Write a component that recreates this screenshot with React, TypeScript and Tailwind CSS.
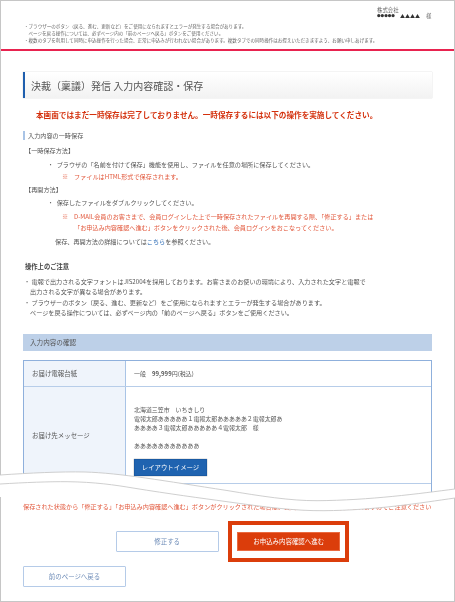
const jpFont = '[font-family:"Noto_Sans_CJK_JP","Liberation_Sans",sans-serif]'

function Bullet({ children }: { children: React.ReactNode }) {
  return (
    <p className="ml-[24.5px] h-[12px] leading-[12px]">
      <span className="inline-block w-[9.2px]">・</span>
      {children}
    </p>
  )
}

function Note({ children }: { children: React.ReactNode }) {
  return (
    <div className="ml-[39px] flex leading-[10.5px] text-[#e2583c]">
      <span className="w-[12px] shrink-0">※</span>
      <div>{children}</div>
    </div>
  )
}

// torn paper band across the page
function TornEdge() {
  const upper = 'M0 475C30 473 60 471.5 85 472C120 473 165 481 227 490.5C260 496 290 500.8 317 500.7C370 500.3 420 493.5 455 489'
  const lower = 'M0 484C25 482.5 50 481.5 67 481.7C95 482 115 485 133 488C170 494 200 498 227 501.7C265 507 295 511 324 510.7C375 510.3 420 503 455 498'
  return (
    <svg viewBox="0 0 455 602" className="pointer-events-none absolute left-[-1px] top-[-1px] h-[602px] w-[455px]">
      <path
        fill="#fff"
        d={`${upper}L455 498C420 503 375 510.3 324 510.7C295 511 265 507 227 501.7C215 500 205 499 195 497L0 497Z`}
      />
      <path d={upper} fill="none" stroke="#c9c9c9" strokeWidth="0.9" />
      <path d={lower} fill="none" stroke="#c9c9c9" strokeWidth="0.9" />
    </svg>
  )
}

export default function App() {
  return (
    <div className={`relative h-[602px] w-[455px] border border-[#c6c6c6] bg-white text-[6.15px] text-[#555] blur-[0.3px] ${jpFont}`}>
      {/* header */}
      <div className="flex justify-end pr-[23px] pt-[6px] text-[5.4px] leading-[6px] text-[#666]">
        <div className="w-[54px]">
          <p>株式会社</p>
          <p className="flex h-[6px] items-center whitespace-nowrap">
            <span className="text-[3.6px] text-[#333]">●●●●●</span>
            <span className="ml-[5px] text-[5px] text-[#333]">▲▲▲▲</span>
            <span className="ml-[6px]">様</span>
          </p>
        </div>
      </div>
      <div className="pl-[23px] pt-[4px] text-[4.56px] leading-[7px] text-[#666]">
        <p>・ブラウザーのボタン（戻る、進む、更新など）をご使用になられますとエラーが発生する場合があります。</p>
        <p className="pl-[4.5px]">ページを戻る操作については、必ずページ内の「前のページへ戻る」ボタンをご使用ください。</p>
        <p>・複数のタブを利用して同時に申込操作を行った場合、正常に申込みが行われない場合があります。複数タブでの同時操作はお控えいただきますよう、お願い申しあげます。</p>
      </div>
      <div className="mt-[5px] h-[2px] bg-[#e8234f]" />

      <div className="px-[22px]">
        {/* title */}
        <div className="mt-[21px] flex h-[26px] items-center border-l-2 border-[#1f5fae] bg-gradient-to-b from-white to-[#f2f2f2] pl-[6px] text-[10px] text-[#555] shadow-[0_0_1px_#bbb]">
          決裁（稟議）発信 入力内容確認・保存
        </div>

        <p className="mt-[11px] h-[12px] pl-[13px] text-[7.62px] font-bold leading-[12px] whitespace-nowrap text-[#d4300c]">
          本画面ではまだ一時保存は完了しておりません。一時保存するには以下の操作を実施してください。
        </p>

        <div className="mt-[10px] flex h-[9px] items-center border-l-2 border-[#a9c4e6] pl-[3px]">入力内容の一時保存</div>

        <p className="ml-[2px] mt-[5px] h-[12px] leading-[12px]">【一時保存方法】</p>
        <div className="mt-[1.5px]">
          <Bullet>ブラウザの「名前を付けて保存」機能を使用し、ファイルを任意の場所に保存してください。</Bullet>
        </div>
        <div className="mt-[1px]">
          <Note>ファイルはHTML形式で保存されます。</Note>
        </div>
        <p className="ml-[2px] mt-[1.5px] h-[12px] leading-[12px]">【再開方法】</p>
        <div className="mt-[1px]">
          <Bullet>保存したファイルをダブルクリックしてください。</Bullet>
        </div>
        <div className="mt-[3.5px]">
          <Note>
            <p>D-MAIL会員のお客さまで、会員ログインした上で一時保存されたファイルを再開する際、「修正する」または</p>
            <p>「お申込み内容確認へ進む」ボタンをクリックされた後、会員ログインをおこなってください。</p>
          </Note>
        </div>
        <p className="ml-[32px] mt-[3px] h-[12px] leading-[12px]">
          保存、再開方法の詳細については<span className="text-[#2a6ab5]">こちら</span>を参照ください。
        </p>

        <p className="ml-[2px] mt-[13px] h-[12px] text-[6.3px] font-bold leading-[12px] text-[#444]">操作上のご注意</p>
        <div className="ml-[1px] mt-[3.8px] leading-[10.4px]">
          <p>・ 電報で出力される文字フォントはJIS2004を採用しております。お客さまのお使いの環境により、入力された文字と電報で</p>
          <p className="pl-[6px]">出力される文字が異なる場合があります。</p>
          <p>・ ブラウザーのボタン（戻る、進む、更新など）をご使用になられますとエラーが発生する場合があります。</p>
          <p className="pl-[6px]">ページを戻る操作については、必ずページ内の「前のページへ戻る」ボタンをご使用ください。</p>
        </div>

        {/* confirm table */}
        <div className="mt-[16px] flex h-[17px] items-center bg-[#bdd0e8] pl-[7px] text-[6.6px]">入力内容の確認</div>
        <div className="mt-[9px] border-x border-t border-[#8fb0dc]">
          <div className="flex h-[26px] border-b border-[#b7cde9]">
            <div className="flex w-[102px] items-center border-r border-[#a9c4e6] bg-[#eff4fb] pl-[8px] text-[6.45px]">お届け電報台紙</div>
            <div className="flex items-center pl-[8px] text-[6px]">
              一般　<span className="font-bold">99,999</span>円(税込)
            </div>
          </div>
          <div className="flex h-[97px] border-b border-[#b7cde9]">
            <div className="flex w-[102px] items-center border-r border-[#a9c4e6] bg-[#eff4fb] pl-[8px] text-[6.45px]">お届け先メッセージ</div>
            <div className="pl-[8px] pt-[17.4px] text-[5.95px] leading-[9px]">
              <p>北海道三笠市　いちきしり</p>
              <p>電報太郎あああああ１電報太郎あああああ２電報太郎あ</p>
              <p>ああああ３電報太郎あああああ４電報太郎　様</p>
              <p className="mt-[9px]">あああああああああああ</p>
              <button className="mt-[8.7px] h-[17.5px] w-[73px] border border-[#1a5aa3] bg-[#1f63b0] text-[6.4px] text-white shadow-[0_0_1px_#777]">
                レイアウトイメージ
              </button>
            </div>
          </div>
        </div>
        <div className="h-[9px] border-r border-[#8fb0dc]" />

        <p className="mt-[7.3px] h-[12px] whitespace-nowrap leading-[12px] text-[#e2583c]">
          保存された状態から「修正する」「お申込み内容確認へ進む」ボタンがクリックされた場合は、会員ログイン画面が表示されますのでご注意ください
        </p>

        {/* actions */}
        <div className="ml-[92.7px] mt-[8.3px] flex items-center gap-[9.5px] text-[6.45px]">
          <button className="h-[20.5px] w-[103px] rounded-[1px] border border-[#b5cbe8] bg-white text-[#6f8db8]">修正する</button>
          <div className="border-4 border-[#db3d0b] bg-white px-[5.2px] py-[6.75px]">
            <button className="block h-[19.5px] w-[102.6px] border border-[#ea6a40] bg-[#db3d0b] text-white">お申込み内容確認へ進む</button>
          </div>
        </div>
        <button className="mt-[4.3px] h-[20.5px] w-[103px] rounded-[1px] border border-[#b5cbe8] bg-white text-[6.45px] text-[#6f8db8]">前のページへ戻る</button>
      </div>

      <TornEdge />
    </div>
  )
}
